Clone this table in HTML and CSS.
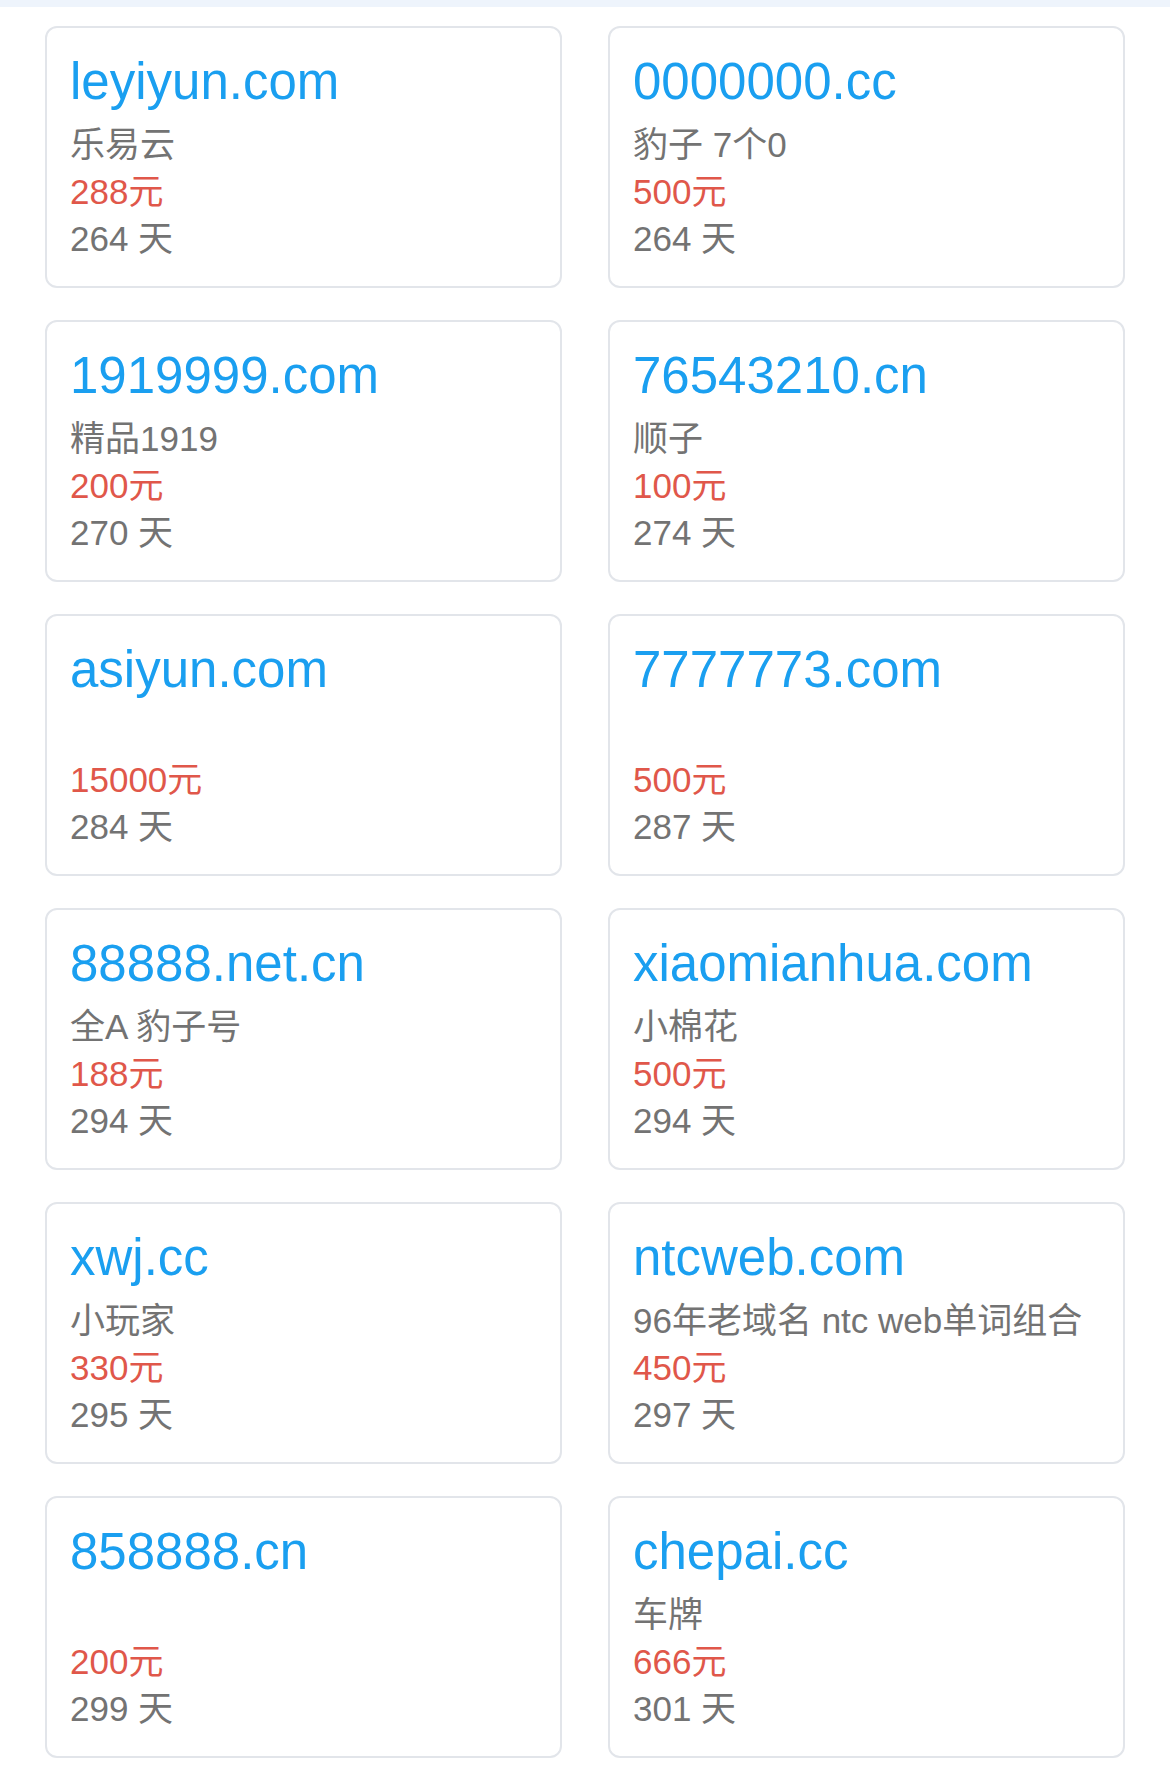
FILE: index.html
```html
<!DOCTYPE html>
<html lang="zh-CN">
<head>
    <meta charset="UTF-8">
    <meta name="viewport" content="width=device-width, initial-scale=1.0">
    <title>域名列表</title>
    <link rel="stylesheet" href="styles.css">
</head>
<body>
    <div class="topbar"></div>

    <div class="list">
        <div class="card">
            <div class="domain">leyiyun.com</div>
            <div class="desc">乐易云</div>
            <div class="price">288元</div>
            <div class="days">264 天</div>
        </div>
        <div class="card">
            <div class="domain">0000000.cc</div>
            <div class="desc">豹子 7个0</div>
            <div class="price">500元</div>
            <div class="days">264 天</div>
        </div>

        <div class="card">
            <div class="domain">1919999.com</div>
            <div class="desc">精品1919</div>
            <div class="price">200元</div>
            <div class="days">270 天</div>
        </div>
        <div class="card">
            <div class="domain">76543210.cn</div>
            <div class="desc">顺子</div>
            <div class="price">100元</div>
            <div class="days">274 天</div>
        </div>

        <div class="card">
            <div class="domain">asiyun.com</div>
            <div class="desc"></div>
            <div class="price">15000元</div>
            <div class="days">284 天</div>
        </div>
        <div class="card">
            <div class="domain">7777773.com</div>
            <div class="desc"></div>
            <div class="price">500元</div>
            <div class="days">287 天</div>
        </div>

        <div class="card">
            <div class="domain">88888.net.cn</div>
            <div class="desc">全A 豹子号</div>
            <div class="price">188元</div>
            <div class="days">294 天</div>
        </div>
        <div class="card">
            <div class="domain">xiaomianhua.com</div>
            <div class="desc">小棉花</div>
            <div class="price">500元</div>
            <div class="days">294 天</div>
        </div>

        <div class="card">
            <div class="domain">xwj.cc</div>
            <div class="desc">小玩家</div>
            <div class="price">330元</div>
            <div class="days">295 天</div>
        </div>
        <div class="card">
            <div class="domain">ntcweb.com</div>
            <div class="desc">96年老域名 ntc web单词组合</div>
            <div class="price">450元</div>
            <div class="days">297 天</div>
        </div>

        <div class="card">
            <div class="domain">858888.cn</div>
            <div class="desc"></div>
            <div class="price">200元</div>
            <div class="days">299 天</div>
        </div>
        <div class="card">
            <div class="domain">chepai.cc</div>
            <div class="desc">车牌</div>
            <div class="price">666元</div>
            <div class="days">301 天</div>
        </div>
    </div>
</body>
</html>
```

FILE: styles.css
```css
* {
    margin: 0;
    padding: 0;
    box-sizing: border-box;
}

body {
    font-family: 'Liberation Sans', 'Noto Sans CJK SC', sans-serif;
    background: #ffffff;
    color: #737373;
}

.topbar {
    height: 7px;
    background: #eef4fc;
}

.list {
    display: grid;
    grid-template-columns: 1fr 1fr;
    column-gap: 46px;
    row-gap: 32px;
    padding: 19px 45px 0;
}

.card {
    height: 262px;
    border: 2px solid #e2e5ea;
    border-radius: 12px;
    padding: 24px 23px 0;
}

.domain {
    font-size: 51px;
    line-height: 60px;
    color: #1a9ff0;
    margin-bottom: 9px;
    white-space: nowrap;
}

.desc,
.price,
.days {
    font-size: 35px;
    line-height: 47px;
    height: 47px;
    white-space: nowrap;
    text-autospace: ideograph-alpha ideograph-numeric;
}

.price {
    color: #e0574a;
}
```
